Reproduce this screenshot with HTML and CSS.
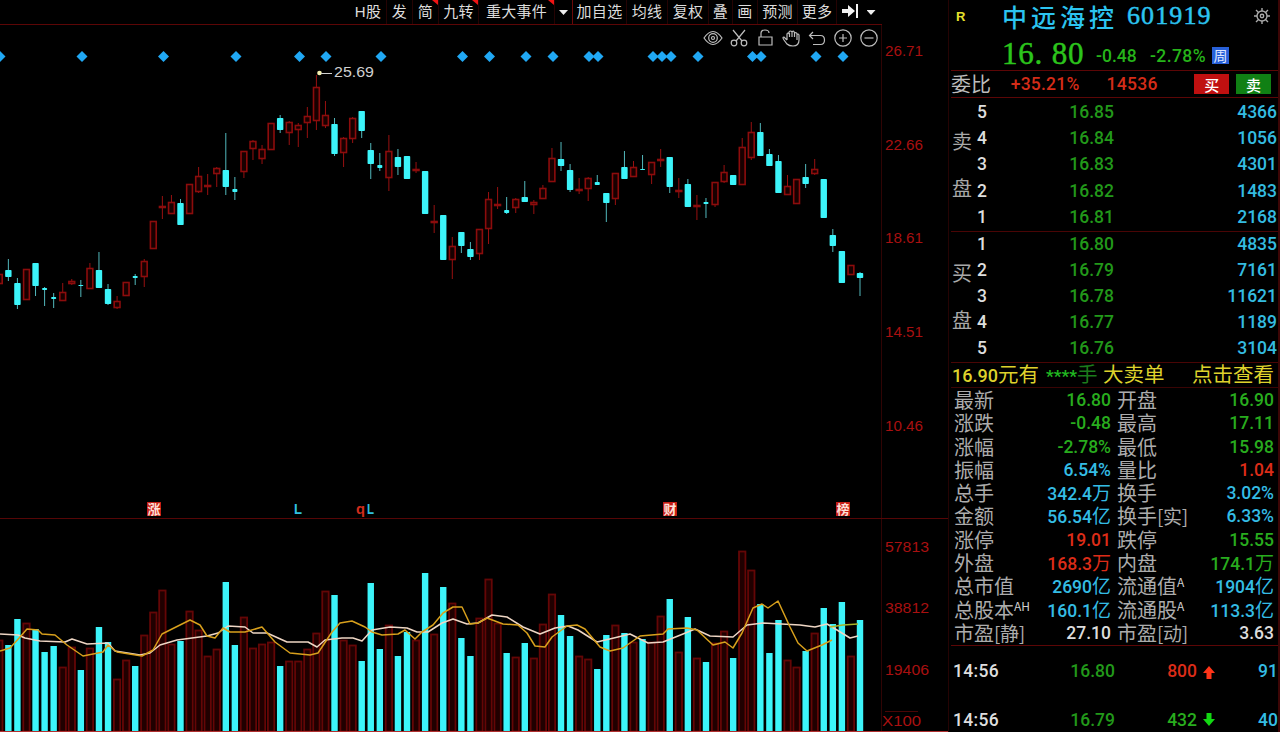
FILE: index.html
```html
<!DOCTYPE html>
<html lang="zh-CN">
<head>
<meta charset="utf-8">
<title>中远海控 601919</title>
<link rel="stylesheet" href="styles.css">
</head>
<body>
<div class="app">
  <main class="chart">
    <nav class="menu">
      <span class="m w37">H股</span><span class="m w26">发</span><span class="m w26 hot">简</span><span class="m w40 hot">九转</span><span class="m w76 hot">重大事件</span><span class="m w18 end"><i class="caret"></i></span><span class="m w54">加自选</span><span class="m w41">均线</span><span class="m w41">复权</span><span class="m w24">叠</span><span class="m w25">画</span><span class="m w40">预测</span><span class="m w39">更多</span><span class="m w26 plain"><svg width="18" height="14" viewBox="0 0 18 14"><path d="M1 5h6V1l7 6-7 6V9H1zM15 0h2v14h-2z" fill="#f2f2f2"/></svg></span><span class="m w20 plain"><i class="caret"></i></span>
    </nav>
    <div class="tools">
      <svg viewBox="0 0 20 20"><path d="M1 10q9-13 18 0q-9 13-18 0z"/><circle cx="10" cy="10" r="4.3"/><circle cx="10" cy="10" r="1.5"/></svg>
      <svg viewBox="0 0 20 20"><path d="M4 2l9 11M16 2L7 13"/><circle cx="5" cy="15" r="2.8"/><circle cx="15" cy="15" r="2.8"/></svg>
      <svg viewBox="0 0 20 20"><path d="M4 9h13v8H4zM6 9V5q0-3 4-3q4 0 4 3"/></svg>
      <svg viewBox="0 0 20 20"><path d="M6 12L3 9Q1 9 3 12l3 4q2 2 6 2q6 0 6-6V7q-1-2-2 0M6 12V6q1-2 2 0V4q1.500-2 3 0q2-2 2.500 1q2-1 2.500 1v6M8.500 5v4M11 4v5M13.500 5v4"/></svg>
      <svg viewBox="0 0 20 20"><path d="M6 4L2.500 7.500L6 11M2.500 7.500h11q4 0 4 4.500t-4 4.500H6"/></svg>
      <svg viewBox="0 0 20 20"><circle cx="10" cy="10" r="8.200"/><path d="M6 10h8M10 6v8"/></svg>
      <svg viewBox="0 0 20 20"><circle cx="10" cy="10" r="8.200"/><path d="M5.500 10h9"/></svg>
    </div>
    <svg id="plot" class="plot" width="948" height="682" viewBox="0 50 948 682"></svg>
  </main>

  <aside class="quote">
    <header class="title">
      <span class="flag">R</span><span class="name">中远海控</span><span class="code">601919</span>
      <svg class="gear" width="18" height="18" viewBox="0 0 18 18"><circle cx="9" cy="9" r="5"/><circle cx="9" cy="9" r="1.700"/><path d="M9 4V1M9 14v3M4 9H1M14 9h3M5.500 5.500L3 3M12.500 12.500L15 15M5.500 12.500L3 15M12.500 5.500L15 3"/></svg>
    </header>
    <section class="last">
      <span class="big">16. 80</span><span class="chg">-0.48</span><span class="pct">-2.78%</span><span class="cycle">周</span>
    </section>
    <section class="ratio">
      <span class="lab">委比</span><span class="num r1">+35.21%</span><span class="num r2">14536</span><button class="btn buy">买</button><button class="btn sell">卖</button>
    </section>
    <section class="book asks">
      <div class="side"><span>卖</span><span>盘</span></div>
      <div class="levels">
        <div class="lv"><b>5</b><em>16.85</em><u>4366</u></div>
        <div class="lv"><b>4</b><em>16.84</em><u>1056</u></div>
        <div class="lv"><b>3</b><em>16.83</em><u>4301</u></div>
        <div class="lv"><b>2</b><em>16.82</em><u>1483</u></div>
        <div class="lv"><b>1</b><em>16.81</em><u>2168</u></div>
      </div>
    </section>
    <section class="book bids">
      <div class="side"><span>买</span><span>盘</span></div>
      <div class="levels">
        <div class="lv"><b>1</b><em>16.80</em><u>4835</u></div>
        <div class="lv"><b>2</b><em>16.79</em><u>7161</u></div>
        <div class="lv"><b>3</b><em>16.78</em><u>11621</u></div>
        <div class="lv"><b>4</b><em>16.77</em><u>1189</u></div>
        <div class="lv"><b>5</b><em>16.76</em><u>3104</u></div>
      </div>
    </section>
    <section class="alert">
      <span class="a1"><b>16.90</b>元有</span><span class="a2"><b>****</b>手</span><span class="a3">大卖单</span><span class="a4">点击查看</span>
    </section>
    <section class="info">
      <div class="row"><span>最新</span><i class="g">16.80</i><span>开盘</span><i class="g">16.90</i></div>
      <div class="row"><span>涨跌</span><i class="g">-0.48</i><span>最高</span><i class="g">17.11</i></div>
      <div class="row"><span>涨幅</span><i class="g">-2.78%</i><span>最低</span><i class="g">15.98</i></div>
      <div class="row"><span>振幅</span><i class="c">6.54%</i><span>量比</span><i class="r">1.04</i></div>
      <div class="row"><span>总手</span><i class="c">342.4<s>万</s></i><span>换手</span><i class="c">3.02%</i></div>
      <div class="row"><span>金额</span><i class="c">56.54<s>亿</s></i><span>换手<q>[实]</q></span><i class="c">6.33%</i></div>
      <div class="row"><span>涨停</span><i class="r">19.01</i><span>跌停</span><i class="g">15.55</i></div>
      <div class="row"><span>外盘</span><i class="r">168.3<s>万</s></i><span>内盘</span><i class="g">174.1<s>万</s></i></div>
      <div class="row"><span>总市值</span><i class="c">2690<s>亿</s></i><span>流通值<sup>A</sup></span><i class="c">1904<s>亿</s></i></div>
      <div class="row"><span>总股本<sup>AH</sup></span><i class="c">160.1<s>亿</s></i><span>流通股<sup>A</sup></span><i class="c">113.3<s>亿</s></i></div>
      <div class="row"><span>市盈<q>[静]</q></span><i class="w">27.10</i><span>市盈<q>[动]</q></span><i class="w">3.63</i></div>
    </section>
    <section class="ticks">
      <div class="tick"><time>14:56</time><em>16.80</em><u class="r">800</u><svg width="14" height="14" viewBox="0 0 14 14"><path d="M7 0l6 7H9.500v6h-5V7H1z" fill="#ff3418"/></svg><b>91</b></div>
      <div class="tick"><time>14:56</time><em>16.79</em><u class="g">432</u><svg class="down" width="14" height="14" viewBox="0 0 14 14"><path d="M7 14l6-7H9.500V1h-5v6H1z" fill="#12d812"/></svg><b>40</b></div>
    </section>
  </aside>
</div>
<script src="chart.js"></script>
</body>
</html>
```

FILE: styles.css
```css
* { box-sizing: border-box; }
body { margin: 0; background: #000; overflow: hidden; font-family: Roboto, "Noto Sans CJK SC", sans-serif; color: #d8d8d8; }
i, em { font-style: normal; }
u, s { text-decoration: none; }
b { font-weight: 500; }
q { quotes: none; }
q::before, q::after { content: none; }

.app { display: grid; grid-template-columns: 948px 332px; width: 1280px; height: 732px; }
.chart { display: flex; flex-direction: column; height: 732px; overflow: hidden; }

.menu { display: flex; height: 25px; width: 882px; padding-left: 350px; border-bottom: 1px solid #5c0606; font: 15px/24px "Liberation Sans", "Noto Sans CJK SC", sans-serif; }
.m { position: relative; flex: none; height: 24px; text-align: center; white-space: nowrap; border-right: 1px solid #250303; color: #dcdcdc; letter-spacing: 0.3px; }
.m.plain { border: 0; }
.m.end { border-color: #6a0808; }
.m.hot::after { content: ""; position: absolute; right: 0; top: 0; border-top: 5px solid #f01414; border-left: 6px solid transparent; }
.m svg { display: block; margin: 4px auto 0; }
.caret { display: block; margin: 10px auto 0; width: 9px; height: 5px; background: #eee; clip-path: polygon(0 0, 100% 0, 50% 100%); }
.w18 { width: 18px; } .w20 { width: 16px; } .w24 { width: 24px; } .w25 { width: 25px; }
.w26 { width: 26px; } .w37 { width: 37px; } .w39 { width: 39px; } .w40 { width: 40px; }
.w41 { width: 41px; } .w54 { width: 54px; } .w76 { width: 76px; }

.tools { display: flex; justify-content: flex-end; gap: 6px; height: 25px; width: 882px; padding: 3px 2px 0 0; border-right: 1px solid #2c0404; }
.tools svg { width: 20px; height: 20px; fill: none; stroke: #bdbdbd; stroke-width: 1.2; }
.plot { display: block; flex: none; overflow: visible; }
.plot text { font-family: "Liberation Sans", "Noto Sans CJK SC", sans-serif; }
.axis { font-size: 14px; fill: #a81010; }
.peak { font-size: 14.5px; fill: #d0d0d0; }
.mark { font-size: 14px; font-weight: 700; }
.stamp { font-size: 13px; font-weight: 700; fill: #ffe0d8; }

.quote { display: flex; flex-direction: column; border-left: 1px solid #250303; border-right: 2px solid #3c0505; padding-left: 2px; font-size: 17.5px; }

.title { display: flex; align-items: center; height: 32px; }
.flag { width: 51px; padding-left: 5px; font: 700 13px "Liberation Sans", sans-serif; color: #e6e02c; }
.name { width: 125px; font: 500 25px/30px "Noto Sans CJK SC", sans-serif; letter-spacing: 4px; color: #2cc4f0; white-space: nowrap; }
.code { width: 126px; font: 26px/30px "Liberation Serif", serif; letter-spacing: 1.1px; color: #2cc4f0; -webkit-text-stroke: 0.5px #2cc4f0; }
.gear { fill: none; stroke: #aaa; stroke-width: 1.4; }

.last { display: flex; align-items: center; height: 39px; padding-left: 51px; border-bottom: 1px solid #5c0606; color: #26b41a; }
.big { width: 94px; padding-top: 4px; font: 31px/35px "Liberation Serif", serif; letter-spacing: 0.8px; white-space: nowrap; color: #2cc41c; -webkit-text-stroke: 0.5px #2cc41c; }
.chg, .pct { padding-top: 10px; font-size: 17.5px; font-weight: 500; }
.chg { width: 54px; }
.pct { width: 62px; letter-spacing: 0.4px; }
.cycle { width: 17px; height: 17px; margin-top: 9px; background: #2860d8; color: #dfe8ff; font: 14px/16px "Noto Sans CJK SC", sans-serif; text-align: center; }

.ratio { display: flex; align-items: center; height: 27px; border-bottom: 1px solid #5c0606; color: #d42c18; font-weight: 500; }
.lab { width: 60px; font: 20px/26px "Noto Sans CJK SC", sans-serif; color: #bcbcbc; }
.r1 { width: 96px; letter-spacing: 0.2px; }
.r2 { width: 88px; letter-spacing: 0.3px; }
.btn { width: 35px; height: 20px; padding: 0; margin-right: 7px; border: 0; font: 500 15px/19px "Noto Sans CJK SC", sans-serif; color: #fff; }
.buy { background: #c01010; }
.sell { background: #108014; }

.book { display: flex; border-bottom: 1px solid #4a0505; }
.asks { height: 134px; }
.bids { height: 131px; }
.side { display: flex; flex-direction: column; gap: 21px; width: 22px; font: 20px/26px "Noto Sans CJK SC", sans-serif; color: #a8a8a8; padding: 30px 0 0 1px; }
.bids .side { padding-top: 28px; }
.levels { flex: 1; display: grid; grid-template-rows: repeat(5, 26.2px); padding-top: 1px; }
.bids .levels { padding-top: 0; grid-template-rows: repeat(5, 26px); margin-top: -1px; }
.lv { display: grid; grid-template-columns: 20px 121px 163px; align-items: center; text-align: right; line-height: 26px; }
.lv b { padding-right: 6px; color: #dedede; font-weight: 500; }
.lv em { color: #22981a; font-weight: 500; }
.lv u { color: #34bce0; font-weight: 500; }

.alert { display: flex; height: 25px; border-bottom: 1px solid #3a0404; font: 20.500px/24px Roboto, "Noto Sans CJK SC", sans-serif; color: #ded22c; white-space: nowrap; }
.alert b { font-size: 18px; }
.a1 { width: 95px; padding-left: 1px; }
.a2 { width: 57px; color: #1c7c1c; }
.a2 b { color: #20b820; font-size: 17px; font-weight: 700; }
.a3 { width: 89px; }

.info { display: grid; grid-template-rows: repeat(11, 23.300px); height: 258px; border-bottom: 1px solid #5c0606; }
.row { display: grid; grid-template-columns: 83px 77px 85px 78px; line-height: 25px; white-space: nowrap; }
.row span { padding-left: 3px; font: 20px/23px "Noto Sans CJK SC", sans-serif; color: #acacac; }
.row span + i + span { padding-left: 6px; }
.row i { text-align: right; font-weight: 500; font-size: 17.500px; }
.row s { font-size: 19px; font-weight: 400; }
.row q { font-size: 19px; letter-spacing: -0.300px; }
.row sup { font-size: 12px; line-height: 0; vertical-align: 7px; color: #cfcfcf; }
.g { color: #28ac1e; }
.r { color: #dc2c18; }
.c { color: #34bce4; }
.w { color: #dcdcdc; }

.ticks { display: grid; grid-template-rows: 49px 49px; }
.tick { display: grid; grid-template-columns: 70px 94px 82px 25px 56px; align-items: center; text-align: right; line-height: 49px; height: 50px; }
.tick time { padding-left: 2px; text-align: left; color: #dedede; letter-spacing: 0.300px; font-weight: 500; }
.tick em { color: #22981a; font-weight: 500; }
.tick u { font-weight: 500; }
.tick svg { margin-left: 5px; margin-top: 3px; }
.tick svg.down { margin-top: -2px; }
.tick b { color: #34bce4; }
```

FILE: chart.js
```js
// Candles: [rising, high, low, bodyTop, bodyBottom, volumeTop] in plot coordinates.
const bars = [
[1,274,284,274,284,640],[0,259,281,270,277,645],[0,278,309,283,305,619],[1,269,300,269,300,623],[0,263,296,263,286,629],
[0,287,306,288,290,652],[0,293,308,297,299,646],[1,283,301,292,301,667],[1,279,285,281,284,647],[0,280,297,285,286,670],
[1,263,289,268,289,648],[0,252,288,270,288,627],[0,284,305,289,304,642],[1,296,309,301,308,679],[1,282,296,282,296,660],
[0,274,285,276,278,666],[1,259,287,261,277,635],[1,221,249,221,249,612],[1,196,219,206,207,590],[1,195,214,202,214,644],
[0,199,225,203,225,641],[1,184,214,184,214,611],[1,167,193,176,192,630],[1,174,195,185,186,656],[1,167,187,168,174,649],
[0,133,195,170,187,582],[0,177,200,189,192,645],[1,151,178,151,172,617],[1,140,160,141,149,648],[1,145,164,149,159,644],
[1,123,150,123,150,642],[0,115,133,118,130,666],[1,121,145,122,133,661],[1,123,147,125,130,661],[1,107,138,116,123,649],
[1,75,130,87,121,633],[1,101,128,115,126,591],[0,118,156,124,154,595],[1,137,167,138,153,640],[1,117,143,118,139,645],
[0,111,138,111,131,661],[0,143,179,150,164,583],[0,153,171,165,168,649],[1,135,191,151,178,625],[0,149,175,157,167,656],
[0,156,179,156,179,632],[1,162,173,169,171,640],[0,171,214,171,214,573],[1,205,233,221,222,634],[0,215,260,215,260,587],
[1,237,279,246,260,603],[0,232,253,232,246,638],[0,242,260,249,257,656],[1,229,260,229,254,618],[1,192,244,199,229,579],
[1,187,209,204,206,623],[0,197,214,210,213,653],[1,198,213,199,208,657],[0,181,202,197,202,643],[1,200,214,202,205,658],
[1,185,199,188,199,624],[1,148,182,158,182,594],[0,142,171,159,166,615],[0,164,192,170,190,636],[1,178,194,189,191,656],
[1,177,201,178,189,659],[0,175,185,182,185,669],[0,193,222,193,203,635],[1,173,205,173,199,625],[0,151,179,167,179,633],
[1,161,177,167,177,642],[0,155,170,169,170,639],[1,162,184,162,175,642],[1,149,167,159,160,616],[0,157,193,157,187,599],
[1,178,198,190,191,652],[0,179,207,184,207,617],[1,195,220,205,206,658],[0,198,218,202,204,662],[1,182,207,182,205,643],
[1,165,183,172,182,631],[0,175,185,175,185,658],[1,138,185,147,185,551],[1,122,160,132,158,570],[0,123,156,132,156,604],
[0,149,166,154,166,653],[0,155,193,161,193,620],[1,175,195,186,195,660],[1,179,204,179,204,667],[0,164,188,177,184,651],
[1,159,175,169,174,633],[0,179,218,179,218,608],[0,229,252,235,246,624],[0,251,283,251,283,602],[1,265,275,265,275,656],
[0,272,296,273,278,620]
];
const out = [];
const line = (x1, y1, x2, y2, c) => out.push(`<path d="M${x1} ${y1}L${x2} ${y2}" stroke="${c}" fill="none"/>`);
const text = (x, y, cls, s, w, extra = '') => out.push(`<text x="${x}" y="${y}" class="${cls}" textLength="${w}" lengthAdjust="spacingAndGlyphs" ${extra}>${s}</text>`);

// Frame
line(881.5, 50, 881.5, 732, '#300404');
line(0, 518.5, 948, 518.5, '#560606');

bars.forEach(([up, hi, lo, t, b, v], i) => {
  const x = -0.7 + 9.06 * i;
  if (up) {
    out.push(`<rect x="${x - 3.2}" y="${v + .5}" width="6.400" height="${731 - v}" fill="#200000" stroke="#640606" stroke-width="1.800"/>`);
    if (hi < t) line(x, hi, x, t, '#981010');
    if (lo > b) line(x, b, x, lo, '#981010');
    out.push(`<rect x="${x - 2.9}" y="${t + .5}" width="5.800" height="${Math.max(1, b - t - 1)}" fill="#180000" stroke="#8c0c0c" stroke-width="1.600"/>`);
  } else {
    out.push(`<rect x="${x - 3.2}" y="${v}" width="6.400" height="${731 - v}" fill="#3cf4fa"/>`);
    line(x, hi, x, lo, '#52b8bc');
    const half = b - t < 4 ? 2.5 : 3.2;
    out.push(`<rect x="${x - half}" y="${t}" width="${half * 2}" height="${b - t}" rx="0.800" fill="#3cf4fa"/>`);
  }
});

// Event diamonds
const days = [0,82,163.5,236,299.5,326,381,462.500,489.500,526,553,589,598,653,662,671,698,752.500,761,816,843];
days.forEach(x => out.push(`<path d="M${x - 5.5} 56.500l5.500-5.500 5.500 5.500-5.500 5.500z" fill="#20a8f4"/>`));
[[589,598],[653,671],[752,761]].forEach(([a, b]) => line(a, 56.5, b, 56.5, '#20a8f4'));

// Volume moving averages
const poly = (pts, c) => out.push(`<polyline points="${pts}" fill="none" stroke="${c}" stroke-width="1.500" stroke-linejoin="round"/>`);
poly('0,634 18,635 25,638 40,641 65,642 72,639 87,644 108,643 115,651 140,655 150,653 160,645 177,640 207,636 218,633 228,626 245,627 253,633 267,633 287,642 308,642 317,647 325,640 342,638 353,638 362,641 372,630 390,627 407,628 417,632 428,632 442,623 453,619 467,624 478,623 492,615 507,617 523,627 540,634 555,628 568,626 578,630 597,642 618,637 630,634 648,643 663,642 683,634 695,629 710,636 733,637 747,625 763,623 800,625 815,627 827,624 837,630 850,638 858,636', '#eed6c4');
poly('0,651 10,648 20,637 27,629 38,630 42,634 55,635 67,645 83,656 103,652 108,645 117,652 142,656 153,650 162,634 190,620 200,625 207,636 215,638 223,628 230,632 245,632 262,627 275,642 290,653 310,655 318,653 332,632 340,623 352,621 365,627 372,632 382,635 398,634 405,630 415,639 422,632 433,625 443,613 453,607 462,607 470,624 478,623 487,618 503,624 518,625 527,633 535,646 545,647 552,637 567,626 577,625 585,629 600,647 610,651 623,648 640,636 663,634 668,629 687,628 697,630 713,645 725,642 733,648 742,633 753,608 762,604 768,608 778,601 790,627 798,643 807,651 822,645 832,640', '#d8a01c');
poly('830,627 843,625 858,624', '#a8b428');

// Peak label
out.push('<circle cx="319.500" cy="73" r="2.300" fill="#f4f0b0"/>');
line(321, 73.5, 332, 73.5, '#d0d0d0');
text(334, 77, 'peak', '25.69', 40);

// Axis labels
[['26.71',56],['22.66',150],['18.61',243],['14.51',337],['10.46',431]].forEach(([s, y]) => text(885, y, 'axis', s, 38));
[['57813',552],['38812',613],['19406',675]].forEach(([s, y]) => text(885, y, 'axis', s, 44));
line(885, 711.5, 918, 711.5, '#4a0606');
text(882, 726, 'axis', 'X100', 39);

// Event markers
[['涨',147],['财',663],['榜',836]].forEach(([s, x]) => {
  out.push(`<rect x="${x}" y="502" width="14" height="14" fill="#c41c14"/>`);
  text(x + 0.5, 514, 'stamp', s, 13);
});
text(294, 514, 'mark', 'L', 8, 'fill="#30c0e0"');
text(356, 514, 'mark', 'q', 9, 'fill="#d02c1c"');
text(367, 514, 'mark', 'L', 7, 'fill="#30c0e0"');

line(0, 731.5, 948, 731.5, '#b03030');
document.getElementById('plot').innerHTML = out.join('');
```
